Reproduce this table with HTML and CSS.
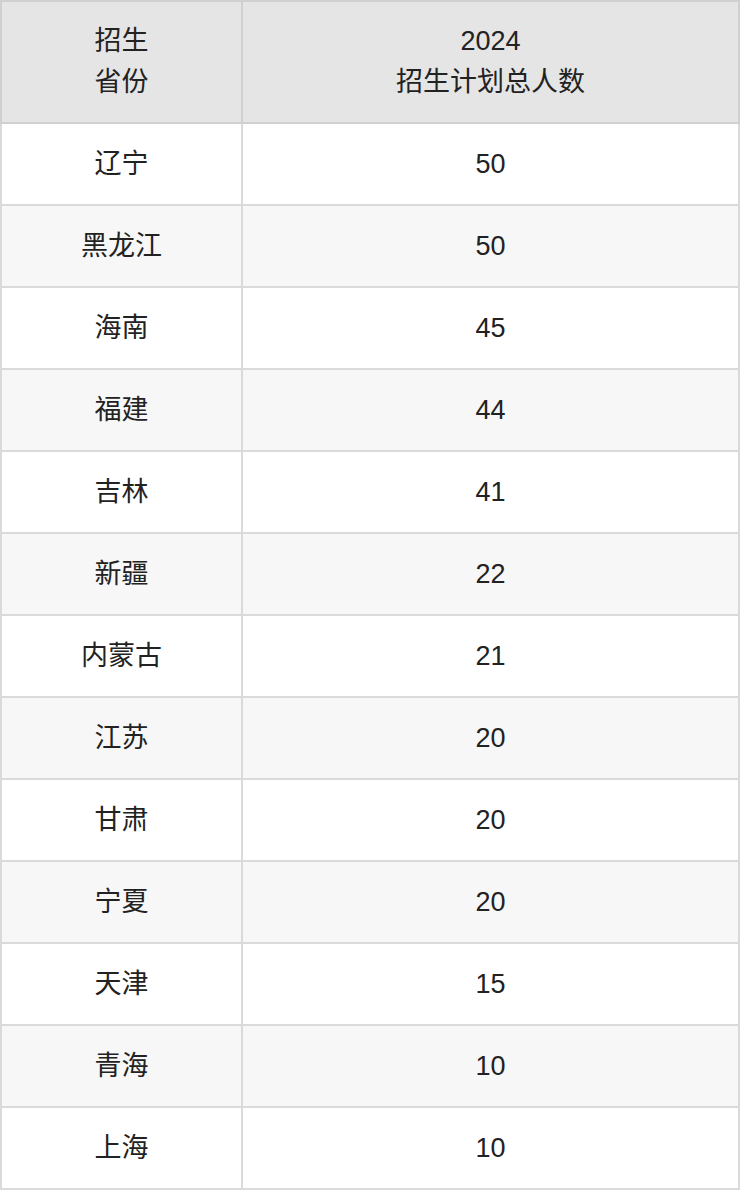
FILE: index.html
```html
<!DOCTYPE html>
<html lang="zh-CN">
<head>
<meta charset="utf-8">
<link rel="stylesheet" href="styles.css">
</head>
<body>
<table class="plan">
  <thead>
    <tr><th class="c1">招生<br>省份</th><th class="c2">2024<br>招生计划总人数</th></tr>
  </thead>
  <tbody>
    <tr><td>辽宁</td><td>50</td></tr>
    <tr><td>黑龙江</td><td>50</td></tr>
    <tr><td>海南</td><td>45</td></tr>
    <tr><td>福建</td><td>44</td></tr>
    <tr><td>吉林</td><td>41</td></tr>
    <tr><td>新疆</td><td>22</td></tr>
    <tr><td>内蒙古</td><td>21</td></tr>
    <tr><td>江苏</td><td>20</td></tr>
    <tr><td>甘肃</td><td>20</td></tr>
    <tr><td>宁夏</td><td>20</td></tr>
    <tr><td>天津</td><td>15</td></tr>
    <tr><td>青海</td><td>10</td></tr>
    <tr><td>上海</td><td>10</td></tr>
  </tbody>
</table>
</body>
</html>
```
FILE: styles.css
```css
html, body {
  margin: 0;
  padding: 0;
  background: #ffffff;
}
.plan {
  width: 740px;
  border-collapse: collapse;
  table-layout: fixed;
  font-family: "Liberation Sans", "Noto Sans CJK SC", sans-serif;
  font-size: 27px;
  color: #222222;
}
.plan th, .plan td {
  text-align: center;
  vertical-align: middle;
  padding: 0;
  border: 2px solid #dadada;
}
.plan th {
  background: #e5e5e5;
  border-color: #d0d0d0;
  font-weight: normal;
  height: 120px;
  line-height: 41px;
}
.plan .c1 { width: 239px; }
.plan td {
  height: 80px;
  line-height: 40px;
}
.plan tbody tr:nth-child(even) td {
  background: #f7f7f7;
}
```
